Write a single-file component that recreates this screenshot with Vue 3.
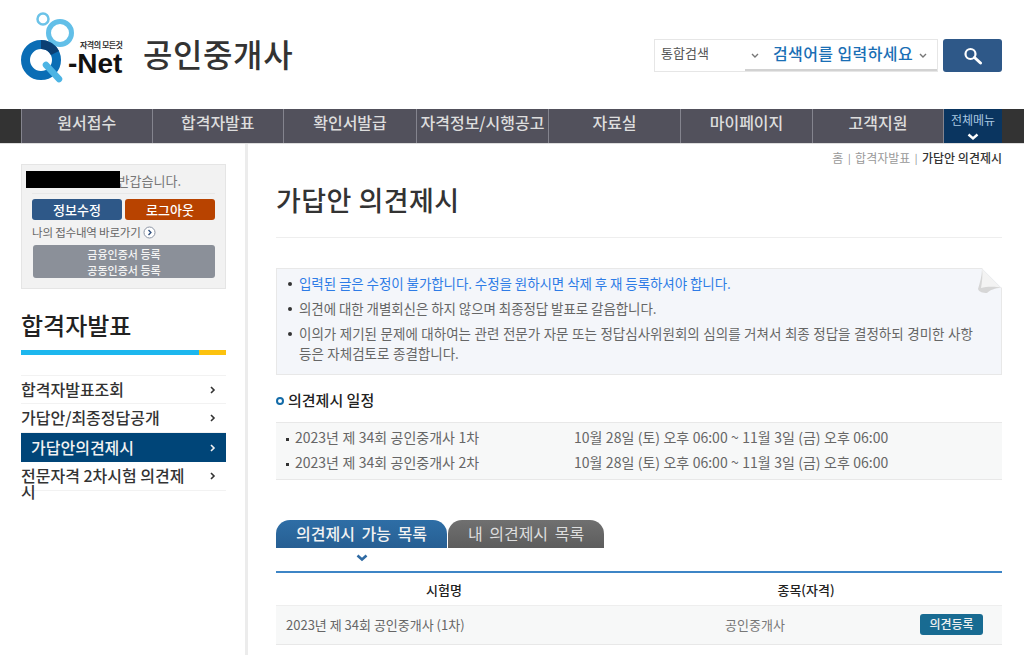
<template>
  <div class="page">
    <header class="top">
      <div class="brand">
        <svg class="logo" width="112" height="90" viewBox="0 0 112 90">
          <circle cx="23" cy="19" r="5.500" fill="none" stroke="#6cc3e8" stroke-width="2.500" />
          <circle cx="40" cy="33" r="11.500" fill="none" stroke="#62bfe8" stroke-width="5" />
          <circle cx="21" cy="60" r="15.500" fill="none" stroke="#0a6db5" stroke-width="9" />
          <path d="M21 40a20 20 0 0 1 18 11l-8 4a11 11 0 0 0-10-6z" fill="#0b3f73" />
          <path d="M26 65l13 14" stroke="#4cb4e4" stroke-width="6.500" stroke-linecap="round" />
          <text x="60" y="47.500" class="logo-small">자격의 모든것</text>
          <text x="48" y="73" class="logo-net">-Net</text>
        </svg>
        <span class="site-title">공인중개사</span>
      </div>
      <div class="search">
        <div class="search-box">
          <span class="scope">통합검색</span>
          <svg class="caret" width="8" height="6" viewBox="0 0 8 6"><path d="M1 1l3 3 3-3" fill="none" stroke="#777" stroke-width="1.400" /></svg>
          <span class="keyword">검색어를 입력하세요</span>
          <svg class="caret" width="8" height="6" viewBox="0 0 8 6"><path d="M1 1l3 3 3-3" fill="none" stroke="#777" stroke-width="1.400" /></svg>
        </div>
        <button class="search-btn" aria-label="검색">
          <svg width="20" height="18" viewBox="0 0 20 18">
            <circle cx="7.500" cy="7" r="5" fill="none" stroke="#fff" stroke-width="2.200" />
            <path d="M11.500 10.500l6 5.500" stroke="#fff" stroke-width="3" stroke-linecap="round" />
          </svg>
        </button>
      </div>
    </header>

    <nav class="gnb">
      <a v-for="m in menus" :key="m" class="gnb-item">{{ m }}</a>
      <a class="gnb-all">
        <span>전체메뉴</span>
        <svg width="12" height="8" viewBox="0 0 12 8"><path d="M1.500 1.500L6 5.500l4.500-4" fill="none" stroke="#fff" stroke-width="2.400" /></svg>
      </a>
    </nav>

    <div class="body">
      <aside class="side">
        <div class="user-box">
          <p class="greet"><i class="redact"></i>반갑습니다.</p>
          <div class="user-btns">
            <button class="btn-blue">정보수정</button>
            <button class="btn-orange">로그아웃</button>
          </div>
          <p class="quick">
            나의 접수내역 바로가기
            <svg width="13" height="13" viewBox="0 0 13 13">
              <circle cx="6.500" cy="6.500" r="5.500" fill="#fff" stroke="#8a93a3" />
              <path d="M5.500 4l2.400 2.500L5.500 9" fill="none" stroke="#33527f" stroke-width="1.400" />
            </svg>
          </p>
          <button class="btn-cert">금융인증서 등록<br />공동인증서 등록</button>
        </div>

        <h2 class="side-title">합격자발표</h2>
        <div class="side-bar"><span></span></div>

        <ul class="side-menu">
          <li v-for="s in sideMenus" :key="s.label" :class="{ on: s.on }">
            <span>{{ s.label }}</span>
            <svg width="6" height="8" viewBox="0 0 6 8"><path d="M1 1l3 3-3 3" fill="none" stroke="currentColor" stroke-width="1.600" /></svg>
          </li>
        </ul>
      </aside>

      <main class="content">
        <div class="crumb">
          <span>홈</span><b class="sep">|</b><span>합격자발표</span><b class="sep">|</b><strong>가답안 의견제시</strong>
        </div>
        <h1 class="title">가답안 의견제시</h1>

        <div class="notice">
          <ul>
            <li class="blue">입력된 글은 수정이 불가합니다. 수정을 원하시면 삭제 후 재 등록하셔야 합니다.</li>
            <li>의견에 대한 개별회신은 하지 않으며 최종정답 발표로 갈음합니다.</li>
            <li>이의가 제기된 문제에 대하여는 관련 전문가 자문 또는 정답심사위원회의 심의를 거쳐서 최종 정답을 결정하되 경미한 사항<br />등은 자체검토로 종결합니다.</li>
          </ul>
          <svg class="fold" width="24" height="26" viewBox="0 0 24 26">
            <path d="M4 0H24V20Z" fill="#fff" />
            <path d="M4 1L23 20C17 20 12 22 9 25 5 25 1 24 0 21 2 14 4 8 4 1Z" fill="#d6d6d6" />
            <path d="M4 1L23 20C16 18 8 19 3 20 4 14 5 7 4 1Z" fill="#f3f3f3" />
          </svg>
        </div>

        <h3 class="sub-title"><i class="dot"></i>의견제시 일정</h3>
        <div class="schedule">
          <div v-for="r in schedule" :key="r.name" class="sch-row">
            <span class="sch-name">{{ r.name }}</span>
            <span>{{ r.date }}</span>
          </div>
        </div>

        <div class="tabs">
          <a class="tab active">의견제시 가능 목록</a>
          <a class="tab">내 의견제시 목록</a>
        </div>
        <svg class="tab-arrow" width="12" height="8" viewBox="0 0 12 8"><path d="M1.500 1.500L6 5.500l4.500-4" fill="none" stroke="#2f6aa3" stroke-width="2.600" /></svg>

        <div class="list">
          <div class="list-head">
            <span class="c-name">시험명</span>
            <span class="c-type">종목(자격)</span>
          </div>
          <div class="list-row">
            <span class="c-name">2023년 제 34회 공인중개사 (1차)</span>
            <span class="c-type">공인중개사</span>
            <span class="c-btn"><button class="btn-reg">의견등록</button></span>
          </div>
        </div>
      </main>
    </div>
  </div>
</template>

<script setup>
const menus = ['원서접수', '합격자발표', '확인서발급', '자격정보/시행공고', '자료실', '마이페이지', '고객지원']

const sideMenus = [
  { label: '합격자발표조회' },
  { label: '가답안/최종정답공개' },
  { label: '가답안의견제시', on: true },
  { label: '전문자격 2차시험 의견제시' }
]

const schedule = [
  { name: '2023년 제 34회 공인중개사 1차', date: '10월 28일 (토) 오후 06:00 ~ 11월 3일 (금) 오후 06:00' },
  { name: '2023년 제 34회 공인중개사 2차', date: '10월 28일 (토) 오후 06:00 ~ 11월 3일 (금) 오후 06:00' }
]
</script>

<style>
html, body { margin: 0; background: #fff; overflow: hidden; }
</style>

<style scoped>
.page { width: 1024px; height: 655px; overflow: hidden; font-family: "Noto Sans CJK KR", "Noto Sans", sans-serif; color: #666; font-size: 13px; }
p, ul, h1, h2, h3 { margin: 0; padding: 0; }
ul { list-style: none; }
button { font-family: inherit; border: 0; padding: 0; }

.top { height: 108px; display: flex; justify-content: space-between; padding: 0 22px 0 20px; }
.brand { display: flex; align-items: flex-start; }
.logo-small { font-size: 8px; font-weight: 700; fill: #333; letter-spacing: -.5px; }
.logo-net { font-family: "Liberation Sans", sans-serif; font-size: 28px; font-weight: 700; fill: #111; }
.site-title { margin: 30px 0 0 11px; font-size: 32px; line-height: 46px; font-weight: 500; color: #333; letter-spacing: .6px; }

.search { display: flex; gap: 5px; margin-top: 39px; height: 33px; }
.search-box { width: 284px; height: 33px; box-sizing: border-box; border: 1px solid #e6e6e6; display: flex; align-items: center; padding-left: 6px; background: linear-gradient(#d2d2d2, #d2d2d2) no-repeat right bottom / 192px 2px; }
.scope { width: 90px; font-size: 13px; color: #555; margin-top: -7px; }
.keyword { margin: 0 6px 5px 14px; font-size: 16px; font-weight: 500; color: #1a6fb5; letter-spacing: .4px; white-space: nowrap; }
.search-btn { width: 59px; height: 33px; background: #2e5888; border-radius: 3px; display: flex; align-items: center; justify-content: center; }

.gnb { height: 34px; margin-top: 1px; background: #333; display: flex; padding: 0 22px 0 21px; border-bottom: 1px solid #ddd; box-sizing: content-box; }
.gnb-item { width: 132px; box-sizing: border-box; background: #52515c; border-left: 1px solid #84848e; text-align: center; color: #ddd; font-size: 16px; font-weight: 500; line-height: 27px; white-space: nowrap; }
.gnb-item:nth-child(1) { width: 130.500px; }
.gnb-item:nth-child(2) { width: 131.500px; }
.gnb-item:nth-child(3) { width: 133px; }
.gnb-item:nth-child(7) { width: 131px; }
.gnb-all { flex: 1; background: #0a3560; border-left: 1px solid #84848e; color: #a9c8e0; font-size: 12px; line-height: 18px; padding-top: 2px; text-align: center; display: flex; flex-direction: column; align-items: center; }
.gnb-all svg { margin-top: 4px; }

.body { display: flex; height: 511px; }
.side { flex: none; width: 226px; padding-left: 21px; box-sizing: border-box; margin-right: 20px; }
.user-box { width: 205px; height: 125px; margin-top: 20px; box-sizing: border-box; background: #f2f2f2; border: 1px solid #e5e5e5; padding: 0 10px; position: relative; }
.greet { height: 28px; line-height: 32px; border-bottom: 1px solid #e8e8e8; text-align: right; padding-right: 34px; color: #777; font-size: 13px; }
.redact { position: absolute; left: 4px; top: 6px; width: 94px; height: 17px; background: #000; }
.user-btns { display: flex; justify-content: space-between; margin-top: 5px; }
.user-btns button { width: 90px; height: 21px; border-radius: 3px; color: #fff; font-size: 13px; font-weight: 500; line-height: 20px; }
.btn-blue { background: #2e5888; }
.btn-orange { background: #b84300; }
.quick { margin-top: 2px; line-height: 20px; font-size: 11.500px; color: #666; letter-spacing: -.2px; display: flex; align-items: center; gap: 2px; }
.btn-cert { display: block; width: 182px; height: 33px; margin: 3px 0 0 1px; border-radius: 3px; background: #8b9099; color: #f4f4f4; font-size: 11px; font-weight: 500; line-height: 16px; }

.side-title { margin-top: 18px; font-size: 24px; line-height: 36px; font-weight: 500; color: #222; }
.side-bar { height: 5px; margin-top: 7px; width: 205px; background: #fcc20f; }
.side-bar span { display: block; width: 178px; height: 5px; background: #1db7ee; }
.side-menu { width: 205px; margin-top: 20px; border-top: 1px solid #f2f2f2; }
.side-menu li { min-height: 28px; box-sizing: border-box; display: flex; align-items: center; justify-content: space-between; padding-right: 10px; border-bottom: 1px solid #f2f2f2; font-size: 16px; line-height: 16px; font-weight: 500; color: #333; }
.side-menu li span { width: 175px; word-break: break-all; margin-bottom: 2px; }
.side-menu li svg { flex: none; }
.side-menu li:nth-child(2) { min-height: 29px; }
.side-menu li.on { height: 29px; background: #004578; color: #f2f2f2; padding-left: 10px; border: 0; }
.side-menu li:last-child { height: 29px; align-items: flex-start; padding-top: 5px; }
.side-menu li:last-child svg { margin-top: 5px; }

.content { flex: 1; padding: 0 22px 0 28px; border-left: 3px solid #ececec; margin-left: -1px; min-width: 0; }
.crumb { height: 26px; display: flex; justify-content: flex-end; align-items: center; gap: 4.500px; color: #999; font-size: 12px; }
.crumb strong { color: #333; font-weight: 500; }
.sep { font-weight: 400; color: #888; font-size: 10px; }
.title { font-size: 27px; line-height: 36px; font-weight: 500; color: #333; margin-top: 12px; padding-bottom: 19px; border-bottom: 1px solid #eee; letter-spacing: .45px; }

.notice { position: relative; margin-top: 30px; height: 107px; box-sizing: border-box; background: #f4f6fa; border: 1px solid #e8e8e8; padding: 4px 26px 0 9px; }
.notice li { position: relative; padding-left: 13px; font-size: 13.500px; line-height: 20px; margin-bottom: 5px; color: #666; letter-spacing: -.08px; }
.notice li::before { content: ""; position: absolute; left: 2px; top: 9px; width: 4px; height: 4px; border-radius: 50%; background: #333; }
.notice li.blue { color: #2e7ce6; }
.notice li:last-child { word-spacing: .5px; letter-spacing: 0; }
.fold { position: absolute; right: -1px; top: -1px; }

.sub-title { margin-top: 13px; font-size: 15px; line-height: 24px; font-weight: 500; color: #222; display: flex; align-items: center; gap: 4px; }
.dot { width: 8px; height: 8px; border-radius: 50%; border: 2px solid #136ba8; box-sizing: border-box; margin-top: 2px; }
.schedule { margin-top: 10px; height: 58px; box-sizing: border-box; background: #f7f8f8; border-top: 1px solid #e8e8e8; border-bottom: 1px solid #e8e8e8; padding-top: 1px; }
.sch-row { display: flex; height: 25px; align-items: center; color: #666; font-size: 14px; word-spacing: .3px; }
.sch-name { width: 298px; padding-left: 19px; box-sizing: border-box; position: relative; }
.sch-name::before { content: ""; position: absolute; left: 10px; top: 11px; width: 3px; height: 3px; background: #333; }

.tabs { display: flex; gap: 1px; margin-top: 40px; height: 28px; }
.tab { height: 28px; border-radius: 14px 14px 0 0; text-align: center; font-size: 16px; line-height: 27px; font-weight: 500; word-spacing: 3px; }
.tab.active { width: 171px; background: linear-gradient(#2e6ea6, #275f93); color: #f2f2f2; }
.tab:not(.active) { width: 156px; background: linear-gradient(#707070, #5d5d5d); color: #ddd; font-weight: 400; }
.tab-arrow { display: block; margin: 6px 0 0 80px; }

.list { margin-top: 9px; border-top: 2px solid #3d85c6; }
.list-head, .list-row { display: flex; align-items: center; }
.list-head { height: 32px; border-bottom: 1px solid #eee; color: #222; font-weight: 500; }
.list-head .c-name { width: 336px; text-align: center; }
.list-head .c-type { width: 388px; text-align: center; }
.list-row { height: 39px; box-sizing: border-box; padding-bottom: 2px; background: #f7f8f8; border-bottom: 1px solid #e8e8e8; }
.list-row .c-name { width: 336px; padding-left: 10px; box-sizing: border-box; color: #666; }
.list-row .c-type { width: 286px; text-align: center; color: #777; }
.c-btn { flex: 1; padding-left: 22px; }
.btn-reg { display: block; width: 63px; height: 21px; border-radius: 3px; background: #186b92; color: #f0f0f0; font-size: 12px; font-weight: 500; line-height: 20px; }
</style>
